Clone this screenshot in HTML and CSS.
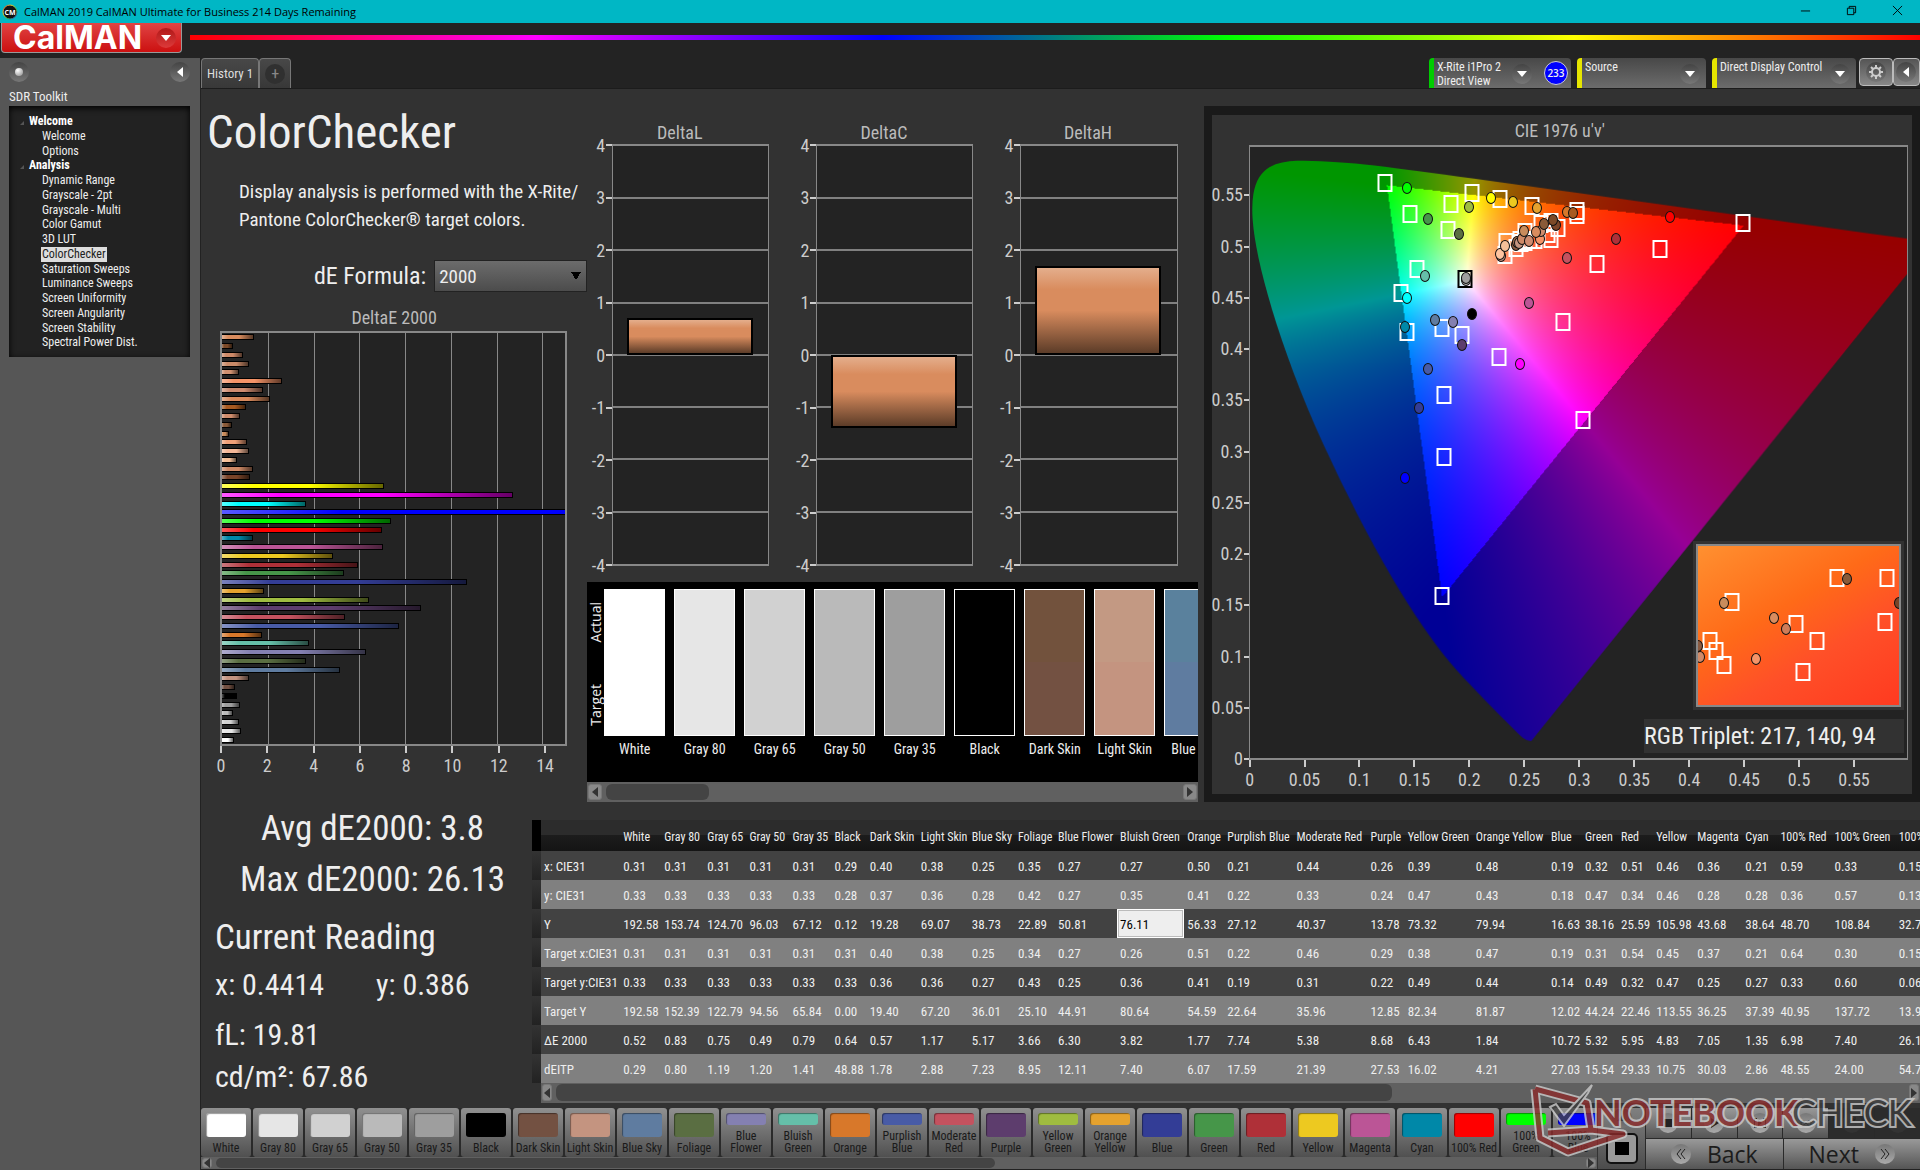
FILE: index.html
```
<!DOCTYPE html>
<html lang="en">
<head>
    <meta charset="UTF-8">
    <meta name="viewport" content="width=device-width, initial-scale=1.0">
    <title>CalMAN 2019 CalMAN Ultimate for Business</title>
    <link rel="stylesheet" href="styles.css">
</head>
<body>
    <header class="titlebar">
        <svg class="app-icon" viewBox="0 0 16 16">
            <defs>
                <linearGradient id="ring" x1="0" y1="0" x2="1" y2="1">
                    <stop offset="0" stop-color="#e33"/><stop offset=".35" stop-color="#dd3"/>
                    <stop offset=".65" stop-color="#3b5"/><stop offset="1" stop-color="#33e"/>
                </linearGradient>
            </defs>
            <circle cx="8" cy="8" r="7" fill="#111" stroke="url(#ring)" stroke-width="1"/>
            <text x="8" y="11" text-anchor="middle">CM</text>
        </svg>
        <span class="app-title">CalMAN 2019 CalMAN Ultimate for Business 214 Days Remaining</span>
        <div class="window-buttons">
            <button aria-label="Minimize"><svg viewBox="0 0 12 12"><path d="M1 6.500H11"/></svg></button>
            <button aria-label="Restore"><svg viewBox="0 0 12 12"><path d="M1.500 3.500h7v7h-7zM3.500 3.500v-2h7v7h-2"/></svg></button>
            <button aria-label="Close"><svg viewBox="0 0 12 12"><path d="M1 1l10 10M11 1L1 11"/></svg></button>
        </div>
    </header>

    <div class="brandbar">
        <button class="logo">CalMAN <span class="knob red"><i class="down"></i></span></button>
        <div class="rainbow"></div>
    </div>

    <div class="app">
        <aside class="sidebar">
            <div class="sidebar-top">
                <button class="knob" aria-label="Pin"><i class="ball"></i></button>
                <button class="knob" aria-label="Collapse"><i class="left"></i></button>
            </div>
            <h2>SDR Toolkit</h2>
            <nav class="tree">
                <b>Welcome</b>
                <a href="#">Welcome</a>
                <a href="#">Options</a>
                <b>Analysis</b>
                <a href="#">Dynamic Range</a>
                <a href="#">Grayscale - 2pt</a>
                <a href="#">Grayscale - Multi</a>
                <a href="#">Color Gamut</a>
                <a href="#">3D LUT</a>
                <a href="#" class="active">ColorChecker</a>
                <a href="#">Saturation Sweeps</a>
                <a href="#">Luminance Sweeps</a>
                <a href="#">Screen Uniformity</a>
                <a href="#">Screen Angularity</a>
                <a href="#">Screen Stability</a>
                <a href="#">Spectral Power Dist.</a>
            </nav>
        </aside>

        <main>
            <div class="tabbar">
                <div class="tabs">
                    <button class="tab">History 1</button>
                    <button class="tab" aria-label="Add tab"><span class="knob dark">+</span></button>
                </div>
                <div class="devices">
                    <div class="device meter">
                        <span>X-Rite i1Pro 2<br>Direct View</span>
                        <button class="knob" aria-label="Meter menu"><i class="down"></i></button>
                        <span class="count">233</span>
                    </div>
                    <div class="device source">
                        <span>Source</span>
                        <button class="knob" aria-label="Source menu"><i class="down"></i></button>
                    </div>
                    <div class="device display">
                        <span>Direct Display Control</span>
                        <button class="knob" aria-label="Display menu"><i class="down"></i></button>
                    </div>
                    <div class="device-tools">
                        <button aria-label="Settings"><span class="knob"><svg class="gear" viewBox="0 0 16 16"><circle cx="8" cy="8" r="4"/><path d="M8 1v3M8 12v3M1 8h3M12 8h3M3 3l2 2M11 11l2 2M13 3l-2 2M5 11l-2 2"/></svg></span></button>
                        <button aria-label="Hide"><span class="knob"><i class="left"></i></span></button>
                    </div>
                </div>
            </div>

            <div class="workspace">
                <section class="overview">
                    <h1>ColorChecker</h1>
                    <p class="intro">Display analysis is performed with the X-Rite/<br>Pantone ColorChecker® target colors.</p>
                    <div class="formula">
                        <label for="formula">dE Formula:</label>
                        <select id="formula"><option>2000</option></select>
                    </div>
                    <h3>DeltaE 2000</h3>
                    <div class="de-plot">
                        <div class="de-grid"><i></i><i></i><i></i><i></i><i></i><i></i><i></i><i></i></div>
                        <div class="de-bars" id="deBars"></div>
                    </div>
                    <div class="de-axis">
                        <span>0</span><span>2</span><span>4</span><span>6</span><span>8</span><span>10</span><span>12</span><span>14</span>
                    </div>
                </section>

                <section class="middle">
                    <div class="deltas" id="deltas"></div>
                    <div class="compare">
                        <div class="compare-side"><span>Actual</span><span>Target</span></div>
                        <div class="compare-list" id="compare"></div>
                    </div>
                    <div class="scrollbar">
                        <button aria-label="Scroll left"><i class="left"></i></button>
                        <div class="track"><div class="thumb" style="width: 18%"></div></div>
                        <button aria-label="Scroll right"><i class="right"></i></button>
                    </div>
                </section>

                <section class="cie">
                    <h3>CIE 1976 u'v'</h3>
                    <div class="cie-body">
                        <div class="cie-y" id="cieY"></div>
                        <div class="cie-plot" id="ciePlot">
                            <canvas id="gamut" width="659" height="614"></canvas>
                            <div class="inset"><div class="inset-plot" id="inset"></div></div>
                            <div class="triplet">RGB Triplet: 217, 140, 94</div>
                        </div>
                        <div class="cie-x" id="cieX"></div>
                    </div>
                </section>
            </div>

            <div class="results">
                <section class="stats">
                    <div class="totals">
                        <p>Avg dE2000: 3.8</p>
                        <p>Max dE2000: 26.13</p>
                    </div>
                    <h2>Current Reading</h2>
                    <p class="xy"><span>x: 0.4414</span><span>y: 0.386</span></p>
                    <p class="lum">fL: 19.81</p>
                    <p class="lum">cd/m²: 67.86</p>
                </section>
                <section class="readings">
                    <div class="table-wrap"><table id="readings"></table></div>
                    <div class="scrollbar">
                        <button aria-label="Scroll left"><i class="left"></i></button>
                        <div class="track"><div class="thumb" style="width: 62%"></div></div>
                        <button aria-label="Scroll right"><i class="right"></i></button>
                    </div>
                </section>
            </div>

            <footer>
                <div class="patches">
                    <div class="patch-list" id="patches"></div>
                    <div class="scrollbar slim">
                        <button aria-label="Scroll left"><i class="left"></i></button>
                        <div class="track"><div class="thumb" style="width: 57%"></div></div>
                        <button aria-label="Scroll right"><i class="right"></i></button>
                    </div>
                </div>
                <div class="pattern">
                    <button aria-label="Up"><span class="knob"><i class="up"></i></span></button>
                    <button class="pattern-box" aria-label="Pattern window"><i></i></button>
                </div>
                <div class="transport">
                    <div class="media">
                        <button aria-label="Stop"><span class="knob"><svg viewBox="0 0 12 12"><path d="M2 2h8v8H2z"/></svg></span></button>
                        <button aria-label="Play"><span class="knob"><svg viewBox="0 0 12 12"><path d="M3 1l8 5-8 5z"/></svg></span></button>
                        <button aria-label="Step"><span class="knob"><svg viewBox="0 0 12 12"><path d="M0 1h3v1H1v8h2v1H0zM12 1H9v1h2v8H9v1h3zM4 3l4 3-4 3z"/></svg></span></button>
                        <button aria-label="Loop"><span class="knob"><svg viewBox="0 0 12 12"><path class="line" d="M6 6C4 3 1 3 1 6s3 3 5 0 5-3 5 0-3 3-5 0z"/></svg></span></button>
                        <button class="off" aria-label="Refresh"><span class="knob"><svg viewBox="0 0 12 12"><path class="line" d="M10 6a4 4 0 1 1-1-3M9 0v3H6"/></svg></span></button>
                        <button class="off" aria-label="Record"><span class="knob"></span></button>
                    </div>
                    <div class="pager">
                        <button><span class="knob"><svg viewBox="0 0 12 12"><path class="line" d="M6 1L2 6l4 5M10 1L6 6l4 5"/></svg></span>Back</button>
                        <button>Next<span class="knob"><svg viewBox="0 0 12 12"><path class="line" d="M2 1l4 5-4 5M6 1l4 5-4 5"/></svg></span></button>
                    </div>
                </div>
            </footer>
        </main>
    </div>

    <svg class="watermark" viewBox="0 0 390 76">
        <g fill="none" stroke-linejoin="round">
            <path class="halo" d="M5 7L57 21L61 48L18 51M5 7L10 56L38 70L93 52L61 48"/>
            <path class="red" d="M5 7L57 21L61 48L18 51M5 7L10 56L38 70L93 52L61 48"/>
        </g>
        <path class="tick" d="M20 25l6-3 8 11L62 3l-4 8-24 33z"/>
        <text x="64" y="44" class="mark-red">NOTEBOOK</text>
        <text x="262" y="44" class="mark-gray">CHECK</text>
    </svg>

    <script src="script.js"></script>
</body>
</html>
```
FILE: styles.css
```
* {
    box-sizing: border-box;
}

body {
    margin: 0;
    min-height: 100vh;
    display: flex;
    flex-direction: column;
    background: #232323;
    color: #eee;
    font-family: "Roboto Condensed", "Open Sans Condensed", Roboto, sans-serif;
    font-size: 12px;
    overflow: hidden;
}

h1, h2, h3, p {
    margin: 0;
    font-weight: 400;
}

button {
    margin: 0;
    padding: 0;
    border: none;
    background: none;
    color: inherit;
    font: inherit;
    cursor: pointer;
}

/* little arrows */
.down, .up, .left, .right {
    width: 0;
    height: 0;
    border: 5px solid transparent;
}

.down {
    border-top: 6px solid #fff;
    border-bottom: none;
}

.up {
    border-bottom: 6px solid #333;
    border-top: none;
}

.left {
    border-right: 6px solid #fff;
    border-left: none;
}

.right {
    border-left: 6px solid #fff;
    border-right: none;
}

.knob {
    display: flex;
    align-items: center;
    justify-content: center;
    flex: none;
    width: 20px;
    height: 20px;
    border-radius: 50%;
    background: linear-gradient(#444, #777);
}

.knob.red {
    background: linear-gradient(#b01818, #dd3a3a);
}

.knob.dark {
    background: #303030;
    color: #888;
    font-size: 16px;
}

.ball {
    width: 8px;
    height: 8px;
    border-radius: 50%;
    background: radial-gradient(circle at 35% 30%, #fff, #888);
}

/* title bar */
.titlebar {
    display: flex;
    align-items: center;
    height: 23px;
    padding-left: 2px;
    background: #00b7c5;
    color: #000;
}

.app-icon {
    width: 16px;
    height: 16px;
    margin-right: 6px;
}

.app-icon text {
    font: 700 7px "Open Sans", sans-serif;
    fill: #fff;
}

.app-title {
    font-family: "Open Sans", sans-serif;
    font-size: 11px;
}

.window-buttons {
    display: flex;
    margin-left: auto;
}

.window-buttons button {
    width: 46px;
    height: 20px;
}

.window-buttons svg {
    width: 11px;
    height: 11px;
    fill: none;
    stroke: #000;
}

.brandbar {
    display: flex;
    gap: 8px;
    height: 35px;
    padding-left: 1px;
}

.logo {
    display: flex;
    align-items: center;
    justify-content: space-between;
    width: 181px;
    height: 30px;
    padding: 0 5px 0 11px;
    border: 1px solid #999;
    border-top: none;
    border-radius: 0 0 4px 4px;
    background: linear-gradient(#e04444, #cc1010);
    color: #fff;
    font: 700 32px/28px Inter, sans-serif;
}

.rainbow {
    flex: 1;
    height: 5px;
    margin-top: 12px;
    background: linear-gradient(to right, #f00, #f0f, #00f, #0f0, #ff0, #f00);
}

.app {
    flex: 1;
    display: flex;
}

/* sidebar */
.sidebar {
    width: 201px;
    flex: none;
    padding: 4px 10px 0 9px;
    border-right: 1px solid #222;
    background: #565656;
}

.sidebar-top {
    display: flex;
    justify-content: space-between;
}

.sidebar h2 {
    margin: 6px 0 1px;
    font-size: 13px;
    line-height: 17px;
}

.tree {
    display: grid;
    grid-auto-rows: 1fr;
    justify-items: start;
    min-height: 251px;
    padding: 8px 0 7px 33px;
    background: #222;
    box-shadow: inset 0 2px 6px #000;
    line-height: 14px;
}

.tree b {
    margin-left: -22px;
    color: #fff;
}

.tree b::before {
    content: "";
    display: inline-block;
    margin-right: 5px;
    border-left: 4px solid transparent;
    border-bottom: 4px solid #555;
}

.tree a {
    color: #eee;
    text-decoration: none;
}

.tree .active {
    margin-left: -1px;
    padding: 0 1px;
    background: #ddd;
    color: #222;
}

main {
    flex: 1;
    min-width: 0;
    display: flex;
    flex-direction: column;
    background: #323232;
}

/* tabs and devices */
.tabbar {
    display: flex;
    justify-content: space-between;
    height: 31px;
    border-bottom: 1px solid #1c1c1c;
    background: #232323;
}

.tabs {
    display: flex;
}

.tab {
    display: flex;
    align-items: center;
    padding: 0 5px;
    border: 1px solid #777;
    border-bottom: none;
    border-radius: 4px 4px 0 0;
    background: linear-gradient(#484848, #383838);
    color: #ddd;
    font-size: 13px;
}

.devices {
    display: flex;
    gap: 6px;
}

.device {
    display: flex;
    justify-content: space-between;
    gap: 8px;
    padding: 2px 6px 0 3px;
    border-left: 5px solid #e6e600;
    border-radius: 4px 4px 0 0;
    background: linear-gradient(#484848, #6c6c6c);
    line-height: 14px;
    white-space: nowrap;
}

.device .knob {
    margin-top: 4px;
}

.meter {
    width: 142px;
    border-color: #0c0;
    padding-right: 3px;
}

.source {
    width: 129px;
}

.display {
    width: 144px;
}

.count {
    width: 24px;
    height: 24px;
    margin-top: 1px;
    border: 1px solid #ccc;
    border-radius: 50%;
    background: #00f;
    font: 600 10px/22px "Open Sans", sans-serif;
    text-align: center;
}

.device-tools {
    display: flex;
    margin-left: -3px;
}

.device-tools button {
    width: 34px;
    height: 28px;
    padding-left: 6px;
    border: 1px solid #bbb;
    border-radius: 4px;
    background: linear-gradient(#555, #888);
}

.device-tools button:last-child {
    width: 27px;
    padding-left: 2px;
}

.gear {
    width: 16px;
    fill: none;
    stroke: #ccc;
    stroke-width: 2;
}

/* workspace */
.workspace {
    display: grid;
    grid-template-columns: 386fr 610fr 722fr;
    padding: 17px 0 18px;
}

h3 {
    color: #bbb;
    font-size: 18px;
    line-height: 22px;
    text-align: center;
}

.overview h1 {
    padding-left: 6px;
    font-size: 47px;
    line-height: 52px;
}

.intro {
    margin: 20px 0 0 38px;
    font-size: 19px;
    line-height: 28px;
}

.formula {
    display: flex;
    justify-content: flex-end;
    align-items: center;
    gap: 8px;
    margin: 26px 0 15px;
    font-size: 24px;
    line-height: 32px;
}

.formula select {
    appearance: none;
    width: 153px;
    height: 32px;
    padding: 0 4px;
    border: 1px solid #222;
    background:
        linear-gradient(to bottom left, #000 50%, transparent 50%) right 10px center / 5px 8px no-repeat,
        linear-gradient(to bottom right, #000 50%, transparent 50%) right 5px center / 5px 8px no-repeat,
        linear-gradient(#6c6c6c, #4c4c4c);
    color: #eee;
    font: inherit;
    font-size: 19px;
}

.de-plot {
    display: grid;
    height: 415px;
    margin: 2px 20px 0 19px;
    border: 2px solid #888;
    background: #232323;
    overflow: hidden;
}

.de-grid, .de-bars {
    grid-area: 1 / 1;
    display: grid;
    min-width: 0;
}

.de-grid {
    grid-template-columns: repeat(7, 2fr) 1fr;
}

.de-grid i + i {
    border-left: 1px solid #888;
}

.de-bars {
    grid-auto-rows: 1fr;
    align-items: center;
}

.de-bars i {
    height: 6px;
    border: 1px solid #000;
    border-left: none;
    background-image: linear-gradient(to right, rgba(255, 255, 255, .35), transparent 20%, transparent 55%, rgba(0, 0, 0, .6));
}

.de-axis {
    display: grid;
    grid-template-columns: repeat(7, 2fr) 1fr;
    margin: 0 20px 0 19px;
}

.de-axis span, .cie-x span {
    display: flex;
    flex-direction: column;
    align-items: center;
    width: 2px;
    color: #ccc;
    font-size: 18px;
    line-height: 26px;
    white-space: nowrap;
}

.de-axis span::before, .cie-x span::before {
    content: "";
    width: 2px;
    height: 7px;
    background: #ccc;
}

/* delta L / C / H */
.middle {
    min-width: 0;
    display: flex;
    flex-direction: column;
}

.deltas {
    display: grid;
    grid-template-columns: 1fr 1fr 1fr;
    gap: 25px;
    padding: 16px 20px 16px 3px;
}

.delta-body {
    display: flex;
    height: 422px;
}

.delta-axis {
    display: flex;
    flex-direction: column;
    justify-content: space-between;
    width: 22px;
    padding: 1px 0;
}

.delta-axis span {
    display: flex;
    align-items: center;
    justify-content: flex-end;
    gap: 1px;
    height: 0;
    color: #ccc;
    font-size: 18px;
}

.delta-axis span::after {
    content: "";
    width: 6px;
    height: 2px;
    background: #ccc;
}

.delta-plot {
    flex: 1;
    display: grid;
    grid-template-rows: repeat(80, 1fr);
    grid-template-columns: 9% 81% 10%;
    border: 2px solid #888;
    border-width: 2px 1px;
    background: #232323;
}

.delta-plot .line {
    grid-column: 1 / 4;
    height: 2px;
    margin-top: -1px;
    background: #808080;
}

.delta-plot .bar {
    grid-column: 2;
    border: 2px solid #000;
    background: linear-gradient(#e4ae8c, #d98c5e 25%, #d98c5e 50%, #5c3c28);
    z-index: 1;
}

/* actual / target swatches */
.compare {
    display: flex;
    height: 200px;
    background: #000;
    overflow: hidden;
}

.compare-side {
    display: flex;
    flex-direction: column;
    justify-content: space-around;
    align-items: center;
    flex: none;
    width: 17px;
    height: 164px;
    font: 14px/16px "Open Sans", sans-serif;
}

.compare-side span {
    writing-mode: vertical-rl;
    rotate: 180deg;
}

.compare-list {
    display: flex;
    gap: 9px;
    padding-top: 7px;
}

.compare-list figure {
    width: 61px;
    flex: none;
    margin: 0;
    text-align: center;
    font-size: 14px;
    line-height: 26px;
    white-space: nowrap;
}

.compare-list figure div {
    height: 147px;
    border: 1px solid #fff;
}

.scrollbar {
    display: flex;
    height: 20px;
    padding: 2px 1px;
    gap: 4px;
    background: #606060;
}

.scrollbar button {
    display: flex;
    align-items: center;
    justify-content: center;
    width: 14px;
    border: 1px solid #777;
    border-radius: 3px;
    background: #888;
}

.scrollbar .left {
    border-right-color: #333;
}

.scrollbar .right {
    border-left-color: #333;
}

.track {
    flex: 1;
}

.thumb {
    height: 100%;
    border-radius: 6px;
    background: #444;
}

/* CIE diagram */
.cie {
    display: flex;
    flex-direction: column;
    margin: 0 0 0 6px;
    padding: 2px 4px 0 0;
    border: 8px solid #1a1a1a;
    border-top-width: 9px;
}

.cie h3 {
    margin: 3px 0 3px;
}

.cie-body {
    flex: 1;
    display: grid;
    grid-template-columns: 37px 1fr;
    grid-template-rows: 615px auto;
}

.cie-y {
    display: grid;
    grid-auto-rows: 1fr;
    align-items: end;
}

.cie-y span {
    display: flex;
    align-items: center;
    justify-content: flex-end;
    gap: 1px;
    height: 2px;
    color: #ccc;
    font-size: 18px;
    line-height: 0;
}

.cie-y span::after {
    content: "";
    flex: none;
    width: 6px;
    height: 2px;
    background: #ccc;
}

.cie-plot {
    position: relative;
    border: 2px solid #888;
    border-width: 2px 1px;
    background: #232323;
    overflow: hidden;
}

#gamut {
    display: block;
    width: 100%;
    height: 100%;
}

.cie-x {
    grid-column: 2;
    display: grid;
    grid-template-columns: repeat(12, 1fr);
}

/* markers are pinned at their u'v' coordinates */
.target, .reading {
    position: absolute;
    translate: -50% -50%;
}

.target {
    width: 15px;
    height: 18px;
    border: 2px solid #fff;
}

.target.black {
    border-color: #000;
}

.reading {
    width: 10px;
    height: 12px;
    border: 1px solid #111;
    border-radius: 50%;
}

.inset {
    position: absolute;
    right: 3px;
    bottom: 48px;
    padding: 3px;
    background: #323232;
}

.inset-plot {
    position: relative;
    width: 205px;
    height: 163px;
    border: 2px solid #888;
    background: linear-gradient(150deg, #ff9030, #ff6a18 40%, #ff5028 65%, #ff3a20);
    overflow: hidden;
}

.triplet {
    position: absolute;
    right: 3px;
    bottom: 5px;
    width: 260px;
    background: #323232;
    font-size: 24px;
    line-height: 34px;
}

/* results */
.results {
    flex: 1;
    display: flex;
}

.stats {
    width: 331px;
    flex: none;
    padding-left: 14px;
}

.totals {
    margin-top: -17px;
    padding-right: 2px;
    text-align: center;
    font-size: 35px;
    line-height: 51px;
}

.stats h2 {
    margin-top: 11px;
    font-size: 35px;
    line-height: 44px;
}

.xy {
    display: flex;
    gap: 52px;
    margin: 4px 0 8px;
    font-size: 30px;
    line-height: 42px;
}

.lum {
    font-size: 30px;
    line-height: 42px;
}

.readings {
    flex: 1;
    min-width: 0;
}

.table-wrap {
    overflow: hidden;
}

table {
    table-layout: fixed;
    width: 1424px;
    border-collapse: collapse;
    white-space: nowrap;
}

th, td {
    height: 29px;
    padding: 1px 0 0 3px;
    font-size: 13px;
    font-weight: 400;
    text-align: left;
    overflow: hidden;
}

thead th {
    height: 31px;
    padding-top: 2px;
    background: linear-gradient(#2c2c2c 50%, #1c1c1c 50%, #141414);
    font-size: 12px;
}

.gutter {
    padding: 0;
    background: linear-gradient(#333, #222);
}

thead .gutter {
    background: #000;
}

tbody tr {
    background: #424242;
}

tbody tr:nth-child(even) {
    background: #808080;
}

td.selected {
    background: #eee;
    box-shadow: inset 0 0 0 1px #fff, inset 0 0 0 2px #bbb;
    color: #000;
}

.readings .scrollbar {
    margin-left: 9px;
    padding-top: 1px;
}

.readings .scrollbar button {
    width: 10px;
}

/* footer */
footer {
    display: flex;
    height: 62px;
    background: #2a2a2a;
    border-bottom: 1px solid #222;
}

.patches {
    flex: 1;
    min-width: 0;
    display: flex;
    flex-direction: column;
}

.patch-list {
    display: flex;
    gap: 2px;
    overflow: hidden;
}

.patch {
    display: flex;
    flex-direction: column;
    align-items: center;
    width: 50px;
    height: 49px;
    flex: none;
    padding: 5px 0 3px;
    border-radius: 3px;
    background: linear-gradient(#909090, #505050);
    color: #1a1a1a;
    line-height: 12px;
    white-space: nowrap;
}

.patch i {
    flex: 1;
    width: 40px;
    margin-bottom: 5px;
    border-radius: 3px;
    box-shadow: inset 1px 1px 1px rgba(0, 0, 0, .4);
}

.scrollbar.slim {
    height: 12px;
    padding: 1px;
}

.scrollbar.slim button {
    width: 10px;
}

.pattern {
    display: flex;
    flex-direction: column;
    justify-content: space-between;
    align-items: center;
    width: 48px;
    padding-bottom: 5px;
    background: linear-gradient(#808080, #4c4c4c);
    border-left: 1px solid #333;
}

.pattern-box {
    display: flex;
    align-items: center;
    justify-content: center;
    width: 32px;
    height: 31px;
    border: 2px solid #111;
    border-radius: 5px;
    background: #999;
}

.pattern-box i {
    width: 14px;
    height: 13px;
    background: #000;
}

.transport {
    display: flex;
    flex-direction: column;
    gap: 1px;
    width: 275px;
    padding-left: 1px;
}

.media, .pager {
    display: flex;
    flex: 1;
    gap: 1px;
}

.media button, .pager button {
    display: flex;
    flex: 1;
    align-items: center;
    justify-content: center;
    background: linear-gradient(#999, #555);
    color: #1c1c1c;
}

.transport .knob {
    background: linear-gradient(#777, #aaa);
}

.transport svg {
    width: 12px;
    height: 12px;
    fill: #222;
}

.transport .line {
    fill: none;
    stroke: #222;
}

.media .off {
    background: #2c2c2c;
}

.media .off .knob {
    background: #333;
}

.pager button {
    gap: 16px;
    font: 500 23px/24px "Open Sans", sans-serif;
}

/* overlay mark in the corner */
.watermark {
    position: absolute;
    right: 0;
    bottom: 12px;
    width: 390px;
    height: 76px;
    opacity: .8;
    pointer-events: none;
}

.watermark .halo {
    stroke: #ccc;
    stroke-width: 9;
}

.watermark .red {
    stroke: #8c2c2c;
    stroke-width: 5;
}

.watermark .tick {
    fill: #444;
    stroke: #ccc;
    stroke-width: 2;
}

.watermark text {
    font: 700 36px Lato, sans-serif;
    stroke: #ccc;
    stroke-width: 4;
    paint-order: stroke;
}

.watermark .mark-red {
    fill: #8c2c2c;
}

.watermark .mark-gray {
    fill: #3c3c3c;
    font-weight: 400;
}
```
FILE: script.js
```
// name, colour, x, y, Y, target x, target y, target Y, dE2000, dEITP, column width
const patches = [
    ["White", "#ffffff", "0.31", "0.33", "192.58", "0.31", "0.33", "192.58", "0.52", "0.29", 41],
    ["Gray 80", "#e6e6e6", "0.31", "0.33", "153.74", "0.31", "0.33", "152.39", "0.83", "0.80", 43],
    ["Gray 65", "#d1d1d1", "0.31", "0.33", "124.70", "0.31", "0.33", "122.79", "0.75", "1.19", 42],
    ["Gray 50", "#bababa", "0.31", "0.33", "96.03", "0.31", "0.33", "94.56", "0.49", "1.20", 43],
    ["Gray 35", "#9e9e9e", "0.31", "0.33", "67.12", "0.31", "0.33", "65.84", "0.79", "1.41", 42],
    ["Black", "#000000", "0.29", "0.28", "0.12", "0.31", "0.33", "0.00", "0.64", "48.88", 35],
    ["Dark Skin", "#735142", "0.40", "0.37", "19.28", "0.40", "0.36", "19.40", "0.57", "1.78", 51],
    ["Light Skin", "#c49480", "0.38", "0.36", "69.07", "0.38", "0.36", "67.20", "1.17", "2.88", 51],
    ["Blue Sky", "#5f7ca0", "0.25", "0.28", "38.73", "0.25", "0.27", "36.01", "5.17", "7.23", 46],
    ["Foliage", "#5a6e42", "0.35", "0.42", "22.89", "0.34", "0.43", "25.10", "3.66", "8.95", 40],
    ["Blue Flower", "#8480b1", "0.27", "0.27", "50.81", "0.27", "0.25", "44.91", "6.30", "12.11", 62],
    ["Bluish Green", "#65bfa9", "0.27", "0.35", "76.11", "0.26", "0.36", "80.64", "3.82", "7.40", 67],
    ["Orange", "#d8782a", "0.50", "0.41", "56.33", "0.51", "0.41", "54.59", "1.77", "6.07", 40],
    ["Purplish Blue", "#485ba6", "0.21", "0.22", "27.12", "0.22", "0.19", "22.64", "7.74", "17.59", 69],
    ["Moderate Red", "#c4525f", "0.44", "0.33", "40.37", "0.46", "0.31", "35.96", "5.38", "21.39", 74],
    ["Purple", "#5d3d6d", "0.26", "0.24", "13.78", "0.29", "0.22", "12.85", "8.68", "27.53", 37],
    ["Yellow Green", "#9fbc40", "0.39", "0.47", "73.32", "0.38", "0.49", "82.34", "6.43", "16.02", 68],
    ["Orange Yellow", "#e5a22e", "0.48", "0.43", "79.94", "0.47", "0.44", "81.87", "1.84", "4.21", 75],
    ["Blue", "#333d96", "0.19", "0.18", "16.63", "0.19", "0.14", "12.02", "10.72", "27.03", 34],
    ["Green", "#469649", "0.32", "0.47", "38.16", "0.31", "0.49", "44.24", "5.32", "15.54", 36],
    ["Red", "#af3038", "0.51", "0.34", "25.59", "0.54", "0.32", "22.46", "5.95", "29.33", 35],
    ["Yellow", "#edc920", "0.46", "0.46", "105.98", "0.45", "0.47", "113.55", "4.83", "10.75", 41],
    ["Magenta", "#bb5596", "0.36", "0.28", "43.68", "0.37", "0.25", "36.25", "7.05", "30.03", 48],
    ["Cyan", "#0088a8", "0.21", "0.28", "38.64", "0.21", "0.27", "37.39", "1.35", "2.86", 35],
    ["100% Red", "#ff0000", "0.59", "0.36", "48.70", "0.64", "0.33", "40.95", "6.98", "48.55", 54],
    ["100% Green", "#00ff00", "0.33", "0.57", "108.84", "0.30", "0.60", "137.72", "7.40", "24.00", 64],
    ["100% Blue", "#0000ff", "0.15", "0.13", "32.7", "0.15", "0.06", "13.9", "26.1", "54.7", 60]
];

// remaining bars of the DeltaE chart, top to bottom
const extraBars = [
    [1.4, "#d98c5e"], [0.5, "#7d4a28"], [0.93, "#cf8a68"], [1.2, "#c98a68"], [0.75, "#cf9070"],
    [2.63, "#f59468"], [1.8, "#cf8c70"], [2.1, "#d98a5c"], [1.05, "#a85a20"], [0.8, "#cf8c6c"],
    [0.45, "#8a5a38"], [0.3, "#c98c5c"], [1.1, "#f0a078"], [1.18, "#f5b898"], [0.65, "#f5c098"],
    [1.35, "#cf8a66"], [1.23, "#7a4428"], [7.1, "#ffff00"], [12.7, "#ff00ff"], [3.66, "#00ffff"]
];

const $ = id => document.getElementById(id);

function add(parent, tag, cls, text) {
    const el = document.createElement(tag);
    if (cls) el.className = cls;
    if (text !== undefined) el.textContent = text;
    parent.appendChild(el);
    return el;
}

// DeltaE bars
const bars = extraBars.concat(patches.slice().reverse().map(p => [Number(p[8]), p[1]]));
bars.forEach(([value, color]) => {
    const bar = add($("deBars"), "i");
    bar.style.width = value / 15 * 100 + "%";
    bar.style.backgroundColor = color;
});

// DeltaL, DeltaC, DeltaH
[["DeltaL", 0.7], ["DeltaC", -1.4], ["DeltaH", 1.7]].forEach(([name, value]) => {
    const box = add($("deltas"), "div", "delta");
    add(box, "h3", "", name);
    const body = add(box, "div", "delta-body");
    const axis = add(body, "div", "delta-axis");
    const plot = add(body, "div", "delta-plot");
    for (let n = 4; n >= -4; n--) {
        add(axis, "span", "", n);
        if (Math.abs(n) < 4) {
            add(plot, "div", "line").style.gridRow = (4 - n) * 10 + 1;
        }
    }
    const top = 41 - Math.round(Math.max(value, 0) * 10);
    const bottom = 41 - Math.round(Math.min(value, 0) * 10);
    add(plot, "div", "bar").style.gridRow = top + " / " + bottom;
});

// actual over target
const actual = { "Dark Skin": "#72523d", "Light Skin": "#c39983", "Blue Sky": "#5a819d" };
patches.slice(0, 9).forEach(([name, color]) => {
    const fig = add($("compare"), "figure");
    add(fig, "div").style.background = `linear-gradient(${actual[name] || color} 50%, ${color} 50%)`;
    add(fig, "figcaption", "", name);
});

// readings table
const table = $("readings");
const cols = add(table, "colgroup");
[9, 79].concat(patches.map(p => p[10])).forEach(w => add(cols, "col").style.width = w + "px");
const head = add(add(table, "thead"), "tr");
add(head, "th", "gutter");
add(head, "th");
patches.forEach(p => add(head, "th", "", p[0]));
const tbody = add(table, "tbody");
["x: CIE31", "y: CIE31", "Y", "Target x:CIE31", "Target y:CIE31", "Target Y", "ΔE 2000", "dEITP"].forEach((label, i) => {
    const row = add(tbody, "tr");
    add(row, "td", "gutter");
    add(row, "th", "", label);
    patches.forEach(p => add(row, "td", label == "Y" && p[0] == "Bluish Green" ? "selected" : "", p[i + 2]));
});

// patch buttons, the long names take two lines
patches.forEach(([name, color]) => {
    const btn = add($("patches"), "button", "patch");
    add(btn, "i").style.backgroundColor = color;
    const twoLines = name.includes(" ") && name.length > 10 || /100% (Green|Blue)/.test(name);
    (twoLines ? name.split(" ") : [name]).forEach(t => add(btn, "span", "", t));
});

// CIE axes
for (let i = 11; i >= 0; i--) add($("cieY"), "span", "", i * 5 / 100);
for (let i = 0; i < 12; i++) add($("cieX"), "span", "", i * 5 / 100);

// spectral locus, xy
const locus = [
    [.1741, .005], [.1714, .0051], [.1689, .0069], [.1644, .0109], [.1566, .0177], [.144, .0297],
    [.1355, .0399], [.1241, .0578], [.1096, .0868], [.0913, .1327], [.0687, .2007], [.0454, .295],
    [.0235, .4127], [.0082, .5384], [.0039, .6548], [.0139, .7502], [.0389, .812], [.0743, .8338],
    [.1142, .8262], [.1547, .8059], [.2296, .7543], [.3016, .6923], [.3731, .6245], [.4441, .5547],
    [.5125, .4866], [.5752, .4242], [.627, .3725], [.6658, .334], [.6915, .3083], [.719, .2809], [.7347, .2653]
];

function drawGamut() {
    const canvas = $("gamut");
    const ctx = canvas.getContext("2d");
    const w = canvas.width, h = canvas.height;
    const img = ctx.createImageData(w, h);
    for (let py = 0; py < h; py++) {
        for (let px = 0; px < w; px++) {
            const u = (px + .5) / w * .6, v = (h - py - .5) / h * .6;
            const d = 6 * u - 16 * v + 12;
            const x = 9 * u / d, y = 4 * v / d, z = 1 - x - y;
            let rgb = [
                3.2406 * x - 1.5372 * y - .4986 * z,
                -.9689 * x + 1.8758 * y + .0415 * z,
                .0557 * x - .204 * y + 1.057 * z
            ];
            // full brightness inside the Rec.709 triangle, dimmed outside
            const inside = Math.min(...rgb) >= 0;
            const max = Math.max(...rgb);
            rgb = rgb.map(c => Math.max(c, 0) / max * (inside ? 255 : 150));
            img.data.set([...rgb, 255], (py * w + px) * 4);
        }
    }
    ctx.putImageData(img, 0, 0);

    // keep only what lies inside the locus
    ctx.globalCompositeOperation = "destination-in";
    const pts = locus.map(([x, y]) => {
        const d = -2 * x + 12 * y + 3;
        return [4 * x / d / .6 * w, h - 9 * y / d / .6 * h];
    });
    ctx.beginPath();
    ctx.moveTo(...pts[0]);
    for (let i = 1; i < pts.length - 1; i++) {
        const [x, y] = pts[i], [nx, ny] = pts[i + 1];
        ctx.quadraticCurveTo(x, y, (x + nx) / 2, (y + ny) / 2);
    }
    ctx.lineTo(...pts[pts.length - 1]);
    ctx.closePath();
    ctx.fill();
}
drawGamut();

function pin(parent, cls, left, top, color) {
    const el = add(parent, "i", cls);
    el.style.left = left * 100 + "%";
    el.style.top = top * 100 + "%";
    if (color) el.style.backgroundColor = color;
}

const targets = [
    [.1236, .5646], [.2032, .5548], [.1836, .5444], [.1467, .5346], [.1815, .5183], [.2284, .5493],
    [.2581, .5418], [.2992, .5369], [.2992, .533], [.45, .5251], [.3746, .4997], [.3172, .485],
    [.153, .4801], [.1379, .4563], [.1433, .4185], [.1752, .4221], [.194, .4155], [.2275, .3934],
    [.2862, .4283], [.1773, .3568], [.3042, .3324], [.1773, .2955], [.1752, .1592], [.2342, .5068],
    [.2327, .4938], [.2434, .5009], [.2464, .5084], [.2479, .5062], [.2516, .5166], [.251, .5068],
    [.2555, .5084], [.2601, .5084], [.2662, .5247], [.2753, .5264], [.2814, .5205], [.275, .5101], [.2722, .515]
];
const readings = [
    [.1433, .5597, "#00ff00"], [.2007, .5411, "#9fbc40"], [.22, .5499, "#ffff00"], [.2401, .546, "#edc920"],
    [.2619, .5401, "#e5a22e"], [.29, .5362, "#d8782a"], [.2954, .5349, "#a85a20"], [.3838, .5313, "#ff0000"],
    [.3348, .5098, "#af3038"], [.29, .4912, "#c4525f"], [.1626, .5294, "#469649"], [.1907, .515, "#5a6e42"],
    [.1597, .4736, "#65bfa9"], [.1433, .4517, "#00ffff"], [.1417, .4237, "#0088a8"], [.1689, .4302, "#5f7ca0"],
    [.1852, .4286, "#8480b1"], [.194, .4054, "#5d3d6d"], [.2032, .4364, "#000000"], [.2552, .4469, "#bb5596"],
    [.2464, .3865, "#ff00ff"], [.1626, .3816, "#485ba6"], [.1547, .3435, "#333d96"], [.1417, .2753, "#0000ff"],
    [.2297, .4928, "#c49480"], [.2288, .4951, "#ffc4a0"], [.2327, .5029, "#f5c098"], [.2434, .5035, "#8a5a40"],
    [.244, .5068, "#a06a4c"], [.2458, .5062, "#c49480"], [.2482, .5094, "#cf8a68"], [.2546, .5078, "#cf8c70"],
    [.2507, .5172, "#c98c5c"], [.2646, .5094, "#f59468"], [.2656, .5172, "#cf8c6c"], [.261, .5166, "#d98c5e"],
    [.2683, .5244, "#8a5a38"], [.2798, .5234, "#7a4428"], [.2765, .5287, "#7d4a28"],
    [.1971, .4693, "#bababa"], [.1971, .4716, "#9e9e9e"]
];
targets.forEach(([u, v]) => pin($("ciePlot"), "target", u / .6, 1 - v / .6));
pin($("ciePlot"), "target black", .1965 / .6, 1 - .4703 / .6);
readings.forEach(([u, v, c]) => pin($("ciePlot"), "reading", u / .6, 1 - v / .6, c));

// magnified area around the current patch
[[.69, .2], [.94, .2], [.17, .35], [.49, .49], [.59, .6], [.93, .48], [.06, .6], [.09, .66], [.13, .75], [.52, .79]]
    .forEach(([x, y]) => pin($("inset"), "target", x, y));
[[.74, .21, "#8a5a38"], [.13, .36, "#c98c5c"], [.38, .45, "#d98c5e"], [.44, .52, "#cf7c58"],
 [.29, .71, "#f59468"], [1, .36, "#7a4428"], [0, .63, "#8a5a40"], [.01, .7, "#cf8a68"]]
    .forEach(([x, y, c]) => pin($("inset"), "reading", x, y, c));
```
